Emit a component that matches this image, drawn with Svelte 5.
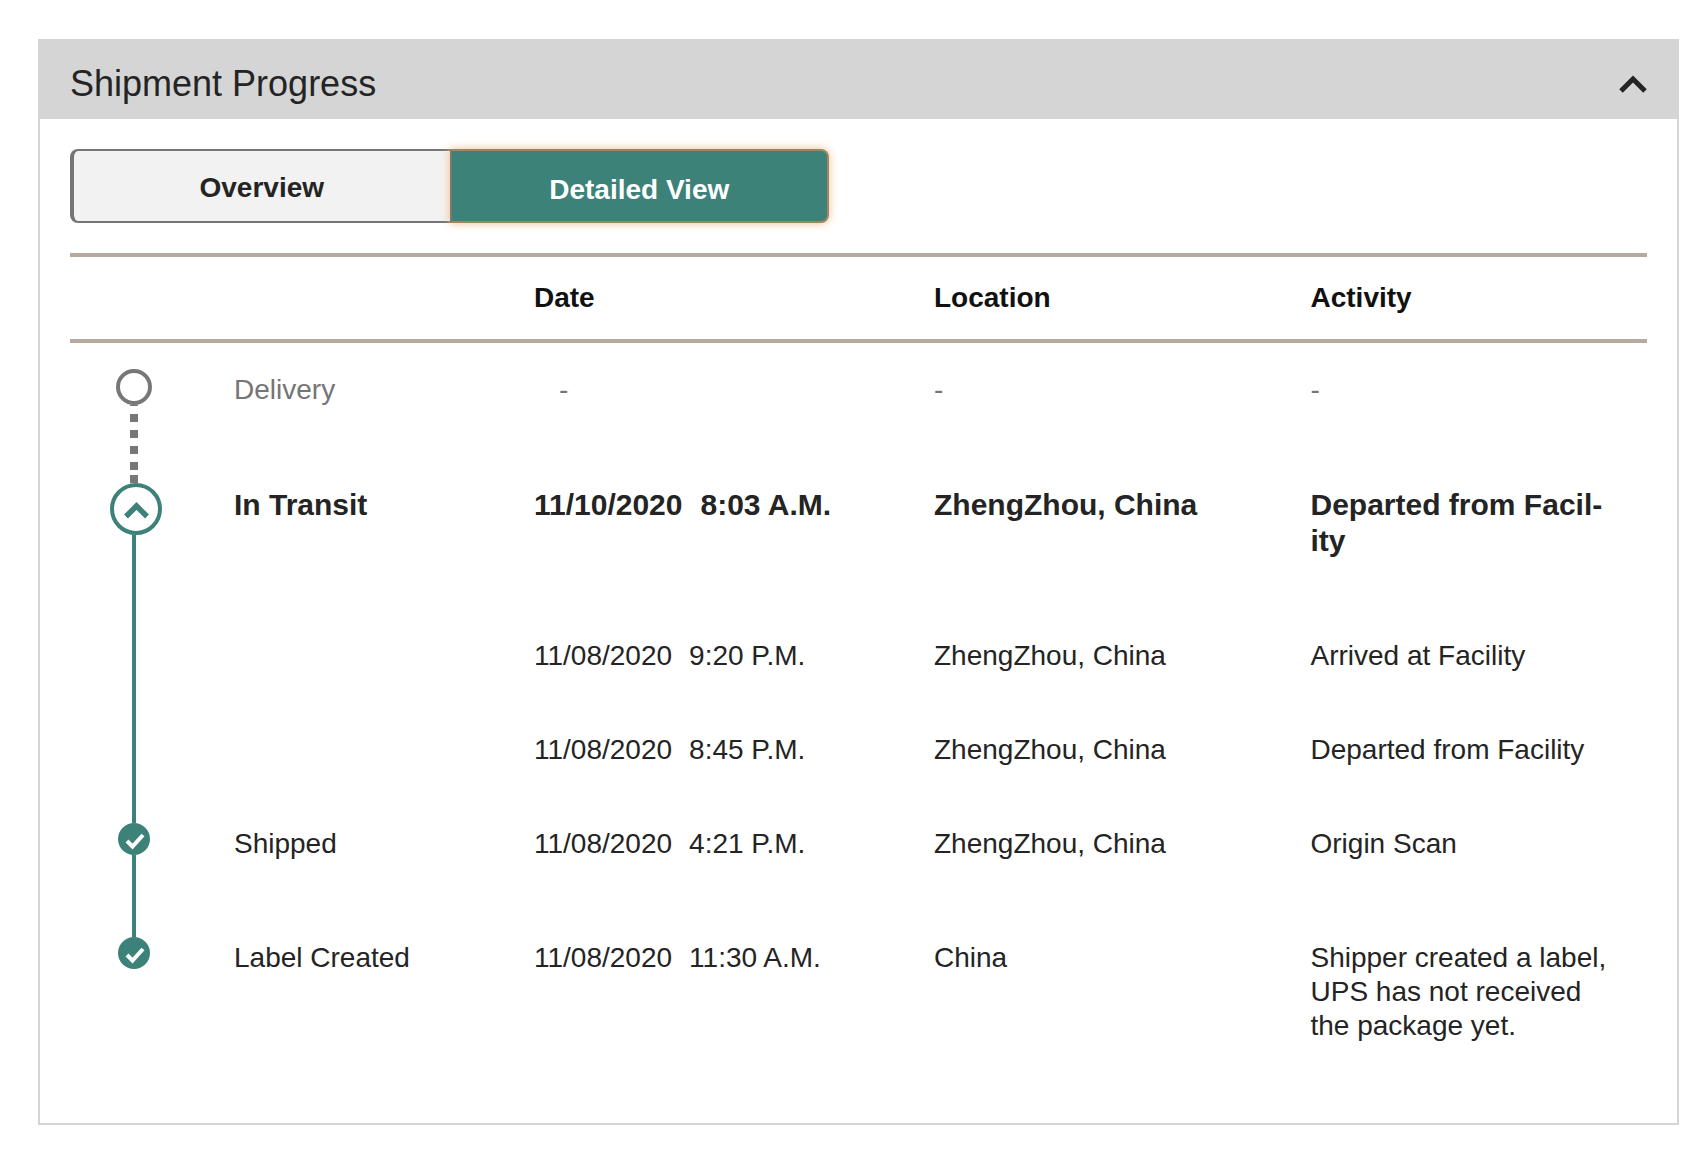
<script>
  const events = [
    { status: 'Delivery', date: '-', time: '', location: '-', activity: ['-'], kind: 'pending' },
    { status: 'In Transit', date: '11/10/2020', time: '8:03 A.M.', location: 'ZhengZhou, China', activity: ['Departed from Facil-', 'ity'], kind: 'current' },
    { status: '', date: '11/08/2020', time: '9:20 P.M.', location: 'ZhengZhou, China', activity: ['Arrived at Facility'], kind: 'line' },
    { status: '', date: '11/08/2020', time: '8:45 P.M.', location: 'ZhengZhou, China', activity: ['Departed from Facility'], kind: 'line' },
    { status: 'Shipped', date: '11/08/2020', time: '4:21 P.M.', location: 'ZhengZhou, China', activity: ['Origin Scan'], kind: 'done' },
    { status: 'Label Created', date: '11/08/2020', time: '11:30 A.M.', location: 'China', activity: ['Shipper created a label,', 'UPS has not received', 'the package yet.'], kind: 'last' }
  ];
</script>

<main class="card">
  <header class="card-head">
    <h2>Shipment Progress</h2>
    <svg class="collapse" width="30" height="18" viewBox="0 0 30 18" aria-hidden="true">
      <path d="M3 16 L15 4 L27 16" fill="none" stroke="#242424" stroke-width="5" />
    </svg>
  </header>

  <div class="card-body">
    <div class="toggle">
      <button class="tab">Overview</button>
      <button class="tab active">Detailed View</button>
    </div>

    <div class="row head">
      <div></div>
      <div></div>
      <div>Date</div>
      <div>Location</div>
      <div>Activity</div>
    </div>

    {#each events as e}
      <div class="row {e.kind}">
        <div class="track">
          {#if e.kind === 'pending'}
            <svg class="node" width="36" height="36" viewBox="0 0 36 36" aria-hidden="true">
              <circle cx="18" cy="18" r="16" fill="none" stroke="#777" stroke-width="4" />
            </svg>
            <span class="dots"></span>
          {:else if e.kind === 'current'}
            <svg class="node shifted" width="52" height="52" viewBox="0 0 52 52" aria-hidden="true">
              <circle cx="26" cy="26" r="24" fill="#fff" stroke="#3c8279" stroke-width="4" />
              <path d="M16 33.5 L26.5 23 L37 33.5" fill="none" stroke="#3c8279" stroke-width="5.5" />
            </svg>
            <span class="wire"></span>
          {:else if e.kind === 'line'}
            <span class="wire"></span>
          {:else}
            <svg class="node" width="32" height="32" viewBox="0 0 32 32" aria-hidden="true">
              <circle cx="16" cy="16" r="16" fill="#3c8279" />
              <path d="M9 18 L14.5 23.5 L25 12" fill="none" stroke="#fff" stroke-width="4" />
            </svg>
            {#if e.kind === 'done'}<span class="wire"></span>{/if}
          {/if}
        </div>
        <div class="cell">{e.status}</div>
        <div class="cell">
          {#if e.time}
            <span class="day">{e.date}</span>{e.time}
          {:else}
            <span class="dash">{e.date}</span>
          {/if}
        </div>
        <div class="cell">{e.location}</div>
        <div class="cell">
          {#each e.activity as line}
            <div>{line}</div>
          {/each}
        </div>
      </div>
    {/each}
  </div>
</main>

<style>
  :global(body) {
    background: #fff;
    font-family: "Liberation Sans", Arial, sans-serif;
    color: #242424;
  }

  .card {
    width: 1641px;
    margin: 39px 0 0 38px;
    box-sizing: border-box;
    border: 2px solid #d5d5d5;
    border-top: 0;
  }

  .card-head {
    height: 80px;
    margin: 0 -2px 0 -1px;
    background: #d5d5d5;
    display: flex;
    align-items: center;
    justify-content: space-between;
    padding: 0 31px 0 31px;
  }

  .card-head h2 {
    margin: 10px 0 0;
    font-size: 36px;
    font-weight: 400;
  }

  .collapse {
    margin-top: 10px;
  }

  .card-body {
    padding: 30px 30px 0 30px;
  }

  .toggle {
    display: flex;
    width: 759px;
    height: 74px;
  }

  .tab {
    flex: none;
    width: 50%;
    box-sizing: border-box;
    font: bold 28px "Liberation Sans", Arial, sans-serif;
    color: #242424;
    background: #f2f2f2;
    border: 2px solid #757575;
    border-left-width: 4px;
    border-right: 0;
    border-radius: 8px 0 0 8px;
    padding: 3px 0 0;
  }

  .tab.active {
    position: relative;
    color: #fff;
    background: #3c8279;
    border: 2px solid #a08562;
    border-left-color: #7a7a6c;
    border-radius: 0 8px 8px 0;
    box-shadow: 0 0 10px #efbd8c;
    padding: 8px 0 0;
  }

  .row {
    display: grid;
    grid-template-columns: 164px 300px 400px 376.5px 1fr;
    height: 94px;
    font-size: 28px;
    line-height: 34px;
  }

  .row.head {
    height: 82px;
    margin-top: 30px;
    border-top: 4px solid #b5aa9d;
    border-bottom: 4px solid #b5aa9d;
    align-items: center;
    font-weight: 700;
    color: #111;
  }

  .track {
    width: 128px;
    display: flex;
    flex-direction: column;
    align-items: center;
  }

  .node {
    flex: none;
    display: block;
  }

  .shifted {
    margin-left: 4px;
  }

  .wire {
    flex: 1;
    width: 4px;
    background: #3c8279;
  }

  .dots {
    flex: 1;
    width: 8px;
    background:
      linear-gradient(#777, #777) bottom / 8px 8px no-repeat,
      linear-gradient(#777 50%, transparent 50%) 0 9px / 8px 16px;
  }

  .cell {
    padding-top: 4px;
  }

  .day {
    margin-right: 17px;
  }

  .current .day {
    margin-right: 18px;
  }

  .dash {
    margin-left: 25px;
  }

  .pending {
    height: 140px;
    color: #757575;
  }

  .pending .track {
    padding-top: 26px;
  }

  .pending .cell {
    padding-top: 30px;
  }

  .current {
    height: 152px;
    font-size: 30px;
    line-height: 36px;
    font-weight: 700;
  }

  .current .cell {
    padding-top: 4px;
  }

  .done {
    height: 114px;
  }

  .last {
    height: 186px;
  }
</style>
